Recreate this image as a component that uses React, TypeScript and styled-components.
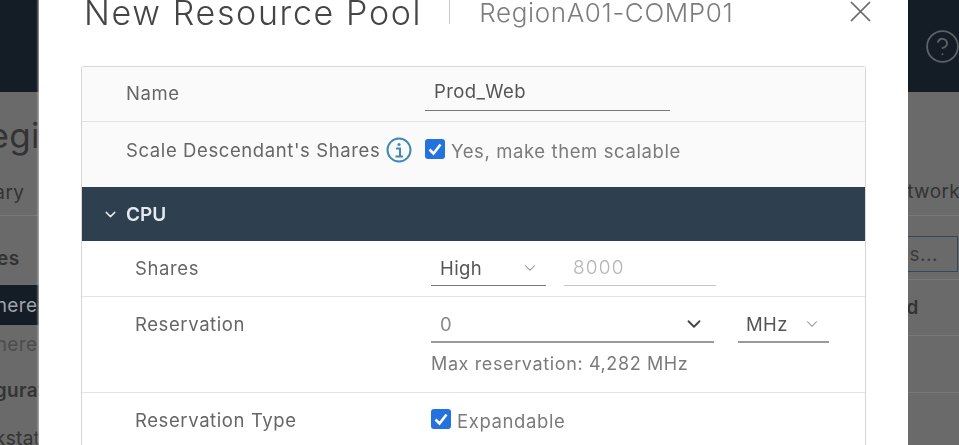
import React, { FC } from "react";
import styled, { createGlobalStyle } from "styled-components";
import { ChevronDown, CircleHelp } from "lucide-react";

const GlobalStyle = createGlobalStyle`
  html, body {
    margin: 0;
    padding: 0;
    background: #6a6a6a;
    overflow: hidden;
  }
  body {
    font-family: "Inter", "Liberation Sans", sans-serif;
  }
`;

const App: FC = () => (
  <>
    <GlobalStyle />
    <Stage>
      <Strip>
        <StripHeader />
        <NavRow $height={78} $top={8} $size={35} $shift={-34}>
          Region
        </NavRow>
        <NavRow $height={46} $shift={-64} $ruled>
          Summary
        </NavRow>
        <NavRow $height={69} $top={15} $bold $shift={-64}>
          Services
        </NavRow>
        <NavRow $height={40} $active $shift={-40}>
          vSphere
        </NavRow>
        <NavRow $height={39} $shift={-40} $faint>
          vSphere
        </NavRow>
        <NavRow $height={46} $top={7} $bold $shift={-57}>
          Configuration
        </NavRow>
        <NavRow $height={40} $top={16} $shift={-43}>
          Workstation
        </NavRow>
      </Strip>

      <Modal>
        <Header>
          <Title>New Resource Pool</Title>
          <Divider />
          <Subtitle>RegionA01-COMP01</Subtitle>
          <CloseIcon viewBox="0 0 21 21">
            <path d="M1 1 L20 20 M20 1 L1 20" />
          </CloseIcon>
        </Header>

        <Card>
          <Row $height={55} $tinted $ruled>
            <Label>Name</Label>
            <NameField>Prod_Web</NameField>
          </Row>
          <Row $height={65} $tinted $lift>
            <LabelGroup>
              <Label>Scale Descendant's Shares</Label>
              <InfoIcon viewBox="0 0 26 26">
                <circle cx="13" cy="13" r="11.5" />
                <path d="M10 11.5 H14 V19 M9.5 19.5 H17" />
                <circle className="dot" cx="13" cy="7.5" r="1.6" />
              </InfoIcon>
            </LabelGroup>
            <CheckWrap>
              <Checkbox>
                <CheckMark viewBox="0 0 20 20">
                  <path d="M4.5 10.5 L8.5 14.5 L15.5 5.5" />
                </CheckMark>
              </Checkbox>
              <CheckText>Yes, make them scalable</CheckText>
            </CheckWrap>
          </Row>

          <Band>
            <ChevronDown size={17} strokeWidth={2} />
            <BandTitle>CPU</BandTitle>
          </Band>

          <Row $height={56} $indent $ruled>
            <Label>Shares</Label>
            <Controls $drop>
              <Select $width={115}>
                <span>High</span>
                <ChevronDown size={18} strokeWidth={1.4} />
              </Select>
              <Disabled>8000</Disabled>
            </Controls>
          </Row>
          <Row $height={96} $indent $ruled $top>
            <Label $offset>Reservation</Label>
            <Stack>
              <Controls>
                <Select $width={283} $strong>
                  <span>0</span>
                  <ChevronDown size={22} strokeWidth={2} />
                </Select>
                <UnitSelect $width={91}>
                  <span>MHz</span>
                  <ChevronDown size={18} strokeWidth={1.4} />
                </UnitSelect>
              </Controls>
              <Hint>Max reservation: 4,282 MHz</Hint>
            </Stack>
          </Row>
          <Row $height={56} $indent>
            <Label>Reservation Type</Label>
            <CheckWrap>
              <Checkbox>
                <CheckMark viewBox="0 0 20 20">
                  <path d="M4.5 10.5 L8.5 14.5 L15.5 5.5" />
                </CheckMark>
              </Checkbox>
              <CheckText>Expandable</CheckText>
            </CheckWrap>
          </Row>
        </Card>
      </Modal>

      <Strip>
        <StripHeader>
          <HelpIcon size={37} strokeWidth={1.2} />
        </StripHeader>
        <NavRow $height={124} $top={76} $shift={-27} $ruled>
          Networks
        </NavRow>
        <ButtonRow>
          <GhostButton>Actions...</GhostButton>
        </ButtonRow>
        <NavRow $height={56} $bold $shift={-66} $ruled>
          Enabled
        </NavRow>
        <NavRow $height={57} $ruled />
      </Strip>
    </Stage>
  </>
);

export default App;

const Stage = styled.div`
  display: grid;
  grid-template-columns: 39px 869px 51px;
  width: 959px;
  height: 445px;
  overflow: hidden;
  filter: blur(0.45px);
`;

const Strip = styled.div`
  display: flex;
  flex-direction: column;
  background: #6a6a6a;
  overflow: hidden;
`;

const StripHeader = styled.div`
  display: flex;
  align-items: center;
  flex: 0 0 92px;
  padding-left: 16px;
  background: #141c25;
`;

const HelpIcon = styled(CircleHelp)`
  flex: none;
  color: #5c6166;
`;

const NavRow = styled.div<{
  $height: number;
  $top?: number;
  $size?: number;
  $shift?: number;
  $bold?: boolean;
  $active?: boolean;
  $faint?: boolean;
  $ruled?: boolean;
}>`
  display: flex;
  align-items: center;
  box-sizing: border-box;
  flex: 0 0 ${(p) => p.$height}px;
  padding-top: ${(p) => p.$top ?? 0}px;
  text-indent: ${(p) => p.$shift ?? 0}px;
  font-size: ${(p) => p.$size ?? 19}px;
  font-weight: ${(p) => (p.$bold ? 600 : 400)};
  letter-spacing: 0.4px;
  white-space: nowrap;
  color: ${(p) => (p.$active ? "#9da3a8" : p.$faint ? "#4d4d4d" : "#333")};
  background: ${(p) => (p.$active ? "#141c25" : "transparent")};
  border-bottom: ${(p) => (p.$ruled ? "1px solid #797979" : "none")};
`;

const ButtonRow = styled.div`
  display: flex;
  align-items: center;
  box-sizing: border-box;
  flex: 0 0 64px;
  padding-top: 13px;
  border-bottom: 1px solid #797979;
`;

const GhostButton = styled.div`
  display: flex;
  align-items: center;
  justify-content: flex-end;
  flex: none;
  box-sizing: border-box;
  width: 120px;
  height: 36px;
  margin-left: -70px;
  padding-right: 19px;
  border: 1px solid #2f4a60;
  font-size: 19px;
  letter-spacing: 0.5px;
  color: #3c3c3c;
`;

const Modal = styled.div`
  box-sizing: border-box;
  height: 445px;
  padding: 0 42px;
  background: #fff;
  box-shadow: 0 0 2px 1px #b9b9b9;
  overflow: hidden;
`;

const Header = styled.div`
  display: flex;
  align-items: center;
  height: 24px;
  margin-bottom: 42px;
`;

const Title = styled.div`
  margin-left: 3px;
  font-size: 34px;
  font-weight: 350;
  letter-spacing: 1.65px;
  white-space: nowrap;
  color: #454545;
`;

const Divider = styled.div`
  flex: none;
  width: 1px;
  height: 24px;
  margin: 0 29px 0 27px;
  background: #c9c9c9;
`;

const Subtitle = styled.div`
  font-size: 26px;
  font-weight: 300;
  letter-spacing: 0.65px;
  white-space: nowrap;
  color: #7d7d7d;
`;

const CloseIcon = styled.svg`
  flex: none;
  width: 21px;
  height: 21px;
  margin-left: auto;
  margin-right: -5px;
  margin-top: -2px;
  fill: none;
  stroke: #666;
  stroke-width: 1.7;
`;

const Card = styled.div`
  border: 1px solid #d7d7d7;
  border-bottom: none;
  border-radius: 3px 3px 0 0;
  background: #fff;
`;

const Row = styled.div<{
  $height: number;
  $tinted?: boolean;
  $indent?: boolean;
  $ruled?: boolean;
  $top?: boolean;
  $lift?: boolean;
}>`
  display: grid;
  grid-template-columns: ${(p) => (p.$indent ? 296 : 299)}px 1fr;
  align-items: ${(p) => (p.$top ? "start" : "center")};
  box-sizing: border-box;
  height: ${(p) => p.$height}px;
  padding-left: ${(p) => (p.$indent ? 53 : 44)}px;
  padding-top: ${(p) => (p.$top ? 14 : 0)}px;
  padding-bottom: ${(p) => (p.$lift ? 7 : 0)}px;
  background: ${(p) => (p.$tinted ? "#fafafa" : "#fff")};
  border-bottom: ${(p) => (p.$ruled ? "1px solid #e2e2e2" : "none")};
`;

const LabelGroup = styled.div`
  display: flex;
  align-items: center;
`;

const Label = styled.div<{ $offset?: boolean }>`
  margin-top: ${(p) => (p.$offset ? 2 : -2)}px;
  font-size: 18.5px;
  letter-spacing: 0.6px;
  white-space: nowrap;
  color: #666;
`;

const NameField = styled.div`
  box-sizing: border-box;
  width: 245px;
  height: 34px;
  padding: 3px 0 0 9px;
  border-bottom: 1px solid #777;
  font-size: 18.5px;
  letter-spacing: 0.4px;
  color: #555;
`;

const InfoIcon = styled.svg`
  flex: none;
  width: 26px;
  height: 26px;
  margin: -3px 0 0 6px;
  fill: none;
  stroke: #3f88b5;
  stroke-width: 2;

  .dot {
    fill: #3f88b5;
    stroke: none;
  }
`;

const CheckWrap = styled.div`
  display: flex;
  align-items: center;
  margin-top: -4px;
`;

const Checkbox = styled.div`
  display: flex;
  flex: none;
  align-items: center;
  justify-content: center;
  width: 20px;
  height: 20px;
  border-radius: 3px;
  background: #2471e0;
`;

const CheckMark = styled.svg`
  width: 20px;
  height: 20px;
  fill: none;
  stroke: #fff;
  stroke-width: 2.6;
`;

const CheckText = styled.span`
  margin: 4px 0 0 6px;
  font-size: 18.5px;
  letter-spacing: 0.6px;
  white-space: nowrap;
  color: #7b7b7b;
`;

const Band = styled.div`
  display: flex;
  align-items: center;
  gap: 7px;
  height: 54px;
  padding-left: 20px;
  background: #2e4050;
  color: #e4eaee;
`;

const BandTitle = styled.span`
  font-size: 19px;
  font-weight: 600;
`;

const Controls = styled.div<{ $drop?: boolean }>`
  display: flex;
  align-items: flex-end;
  gap: 18px;
  margin-top: ${(p) => (p.$drop ? 3 : 0)}px;
`;

const Select = styled.div<{ $width: number; $strong?: boolean }>`
  display: flex;
  align-items: center;
  justify-content: space-between;
  box-sizing: border-box;
  width: ${(p) => p.$width}px;
  height: 32px;
  padding: 0 ${(p) => (p.$strong ? 9 : 7)}px 4px 9px;
  border-bottom: ${(p) => (p.$strong ? "2px solid #9a9a9a" : "1px solid #777")};
  font-size: 18.5px;
  letter-spacing: 0.4px;
  color: ${(p) => (p.$strong ? "#8a8a8a" : "#555")};

  svg {
    color: ${(p) => (p.$strong ? "#444" : "#8a8a8a")};
  }
`;

const UnitSelect = styled(Select)`
  margin-left: 6px;
  padding: 0 8px 4px 8px;
  border-bottom: 2px solid #9a9a9a;
  color: #555;
`;

const Disabled = styled.div`
  box-sizing: border-box;
  width: 152px;
  height: 32px;
  padding: 2px 0 0 9px;
  border-bottom: 1px solid #c4c4c4;
  font-size: 19px;
  font-weight: 300;
  letter-spacing: 1.2px;
  color: #b5b5b5;
`;

const Stack = styled.div`
  display: flex;
  flex-direction: column;
`;

const Hint = styled.div`
  margin-top: 10px;
  font-size: 18px;
  letter-spacing: 0.62px;
  color: #7b7b7b;
`;
